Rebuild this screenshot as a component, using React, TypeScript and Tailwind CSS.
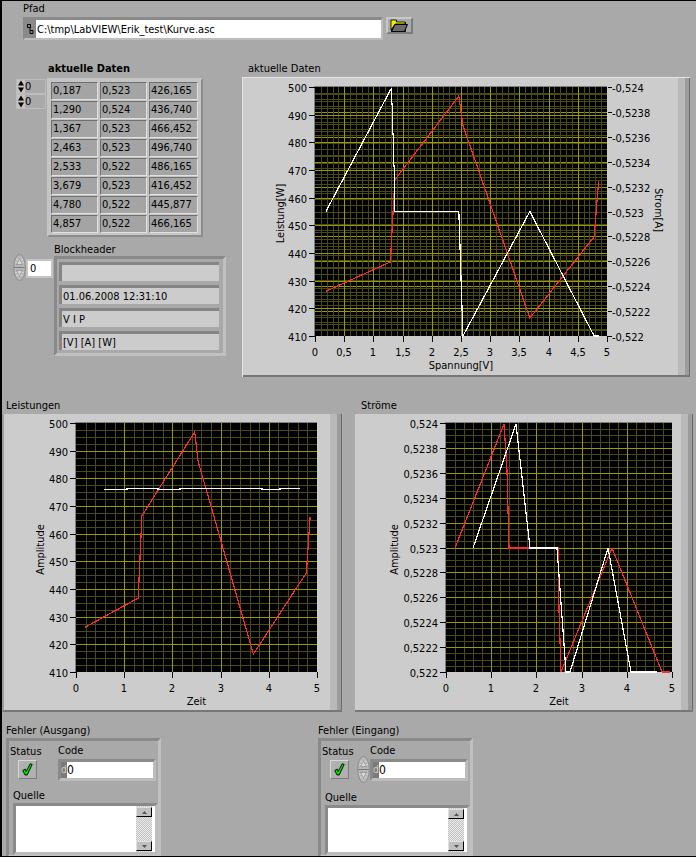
import React from 'react';

const V = [0.187, 1.29, 1.367, 2.463, 2.533, 3.679, 4.78, 4.857];
const W = [426.165, 436.74, 466.452, 496.74, 486.165, 416.452, 445.877, 466.165];
const I = [0.523, 0.524, 0.523, 0.523, 0.522, 0.523, 0.522, 0.522];

const ROWS = [
  ['0,187', '0,523', '426,165'],
  ['1,290', '0,524', '436,740'],
  ['1,367', '0,523', '466,452'],
  ['2,463', '0,523', '496,740'],
  ['2,533', '0,522', '486,165'],
  ['3,679', '0,523', '416,452'],
  ['4,780', '0,522', '445,877'],
  ['4,857', '0,522', '466,165'],
];

const MAJOR = '#9a9a00';
const MINOR = '#4a4a14';
const AMP = ['0,524', '0,5238', '0,5236', '0,5234', '0,5232', '0,523', '0,5228', '0,5226', '0,5224', '0,5222', '0,522'];
const WATT = ['500', '490', '480', '470', '460', '450', '440', '430', '420', '410'];

type Box = { x: number; y: number; w: number; h: number };

// vertical + horizontal grid lines, in page pixels
const gridLines = (b: Box, xDiv: number, xSub: number, yDiv: number, ySub: number) => {
  const out: React.ReactNode[] = [];
  for (let i = 0; i <= xDiv * xSub; i++) {
    const x = Math.round(b.x + (b.w * i) / (xDiv * xSub)) + 0.5;
    if (i % xSub) out.push(<line key={`vm${xDiv}-${i}`} x1={x} x2={x} y1={b.y} y2={b.y + b.h} stroke={MINOR} />);
  }
  for (let i = 0; i <= yDiv * ySub; i++) {
    const y = Math.round(b.y + (b.h * i) / (yDiv * ySub)) + 0.5;
    if (i % ySub) out.push(<line key={`hm${yDiv}-${i}`} x1={b.x} x2={b.x + b.w} y1={y} y2={y} stroke={MINOR} />);
  }
  for (let i = 1; i < xDiv; i++) {
    const x = Math.round(b.x + (b.w * i) / xDiv) + 0.5;
    out.push(<line key={`v${xDiv}-${i}`} x1={x} x2={x} y1={b.y} y2={b.y + b.h} stroke={MAJOR} />);
  }
  for (let i = 1; i < yDiv; i++) {
    const y = Math.round(b.y + (b.h * i) / yDiv) + 0.5;
    out.push(<line key={`h${yDiv}-${i}`} x1={b.x} x2={b.x + b.w} y1={y} y2={y} stroke={MAJOR} />);
  }
  return out;
};

const Curve = ({ pts, color }: { pts: number[][]; color: string }) => (
  <polyline points={pts.map((p) => p.join(',')).join(' ')} fill="none" stroke={color} strokeWidth={1.2} />
);

const Chart = ({
  view,
  box,
  xLabels,
  yLabels,
  yTitle,
  yTitleX,
  xTitle,
  grid,
  children,
}: {
  view: Box;
  box: Box;
  xLabels: string[];
  yLabels: string[];
  yTitle: string;
  yTitleX: number;
  xTitle: string;
  grid: React.ReactNode;
  children: React.ReactNode;
}) => (
  <svg
    width={view.w}
    height={view.h}
    viewBox={`${view.x} ${view.y} ${view.w} ${view.h}`}
    className="block shrink-0"
    fontSize={11}
    shapeRendering="crispEdges"
  >
    <rect x={box.x - 1} y={box.y - 1} width={box.w + 1} height={box.h + 1} fill="#808080" />
    <rect x={box.x} y={box.y} width={box.w} height={box.h} fill="#000" />
    {grid}
    {children}
    {yLabels.map((t, i) => {
      const y = Math.round(box.y + (box.h * i) / (yLabels.length - 1));
      return (
        <g key={t}>
          <line x1={box.x - 6} x2={box.x} y1={y + 0.5} y2={y + 0.5} stroke="#000" />
          <text x={box.x - 8} y={y + 4.5} textAnchor="end" fill="#000">
            {t}
          </text>
        </g>
      );
    })}
    {xLabels.map((t, i) => {
      const x = Math.round(box.x + (box.w * i) / (xLabels.length - 1));
      return (
        <g key={t}>
          <line x1={x + 0.5} x2={x + 0.5} y1={box.y + box.h} y2={box.y + box.h + 6} stroke="#000" />
          <text x={x} y={box.y + box.h + 20} textAnchor="middle" fill="#000">
            {t}
          </text>
        </g>
      );
    })}
    <text x={box.x + box.w / 2} y={box.y + box.h + 33} textAnchor="middle" fill="#000">
      {xTitle}
    </text>
    <text
      transform={`translate(${yTitleX} ${box.y + box.h / 2 + 2}) rotate(-90)`}
      textAnchor="middle"
      fill="#000"
    >
      {yTitle}
    </text>
  </svg>
);

const Panel = ({ children, className }: { children: React.ReactNode; className: string }) => (
  <div className={`flex bg-[#cccccc] border-b-2 border-[#777777] ${className}`}>
    {children}
    <div className="w-[7px] bg-[#b9b9b9]" />
    <div className="w-[4px] bg-[#9c9c9c]" />
    <div className="w-px bg-[#6a6a6a]" />
  </div>
);

const Spinner = ({ className }: { className?: string }) => (
  <svg width="13" height="27" viewBox="0 0 13 28" className={`block shrink-0 ${className ?? ''}`}>
    <ellipse cx="6.5" cy="14" rx="6" ry="13.5" fill="#b8b8b8" stroke="#8a8a8a" />
    <path d="M3 6h7M2 9h9M2 19h9M3 22h7" stroke="#dddddd" />
    <line x1="1" x2="12" y1="14" y2="14" stroke="#777777" />
    <path d="M6.5 5 3.5 11h6z" fill="#dcdcdc" stroke="#777777" strokeWidth="0.6" />
    <path d="M6.5 23 3.5 17h6z" fill="#dcdcdc" stroke="#777777" strokeWidth="0.6" />
  </svg>
);

const IndexBox = () => (
  <div className="flex h-[15px] w-[30px] border border-[#bdbdbd] bg-[#a9a9a9]">
    <svg width="8" height="13" viewBox="0 0 8 13" className="block shrink-0 bg-[#c4c4c4]">
      <path d="M4 0.5 1 5.5h6z" fill="#000" />
      <path d="M4 12.5 1 7.5h6z" fill="#000" />
    </svg>
    <span className="text-[11px] leading-[13px] text-black">0</span>
  </div>
);

const DataTable = () => (
  <div className="flex flex-col gap-px border-2 border-[#c4c4c4] bg-[#c4c4c4] border-r-[#8c8c8c] border-b-[#8c8c8c] p-[2px] w-[156px]">
    {ROWS.map((r) => (
      <div key={r[0] + r[2]} className="flex gap-[2px]">
        {r.map((c, i) => (
          <div
            key={i}
            className={`h-[18px] border border-[#707070] border-r-[#e0e0e0] border-b-[#e0e0e0] bg-[#a4a4a4] text-[11px] leading-[16px] text-black pl-px ${
              i === 2 ? 'w-[49px]' : 'w-[47px]'
            }`}
          >
            {c}
          </div>
        ))}
      </div>
    ))}
  </div>
);

const HeaderField = ({ text }: { text: string }) => (
  <div className="h-[19px] w-[160px] border-t-[3px] border-l-[3px] border-[#858585] bg-[#cccccc] text-[11px] leading-[18px] text-black pl-px">
    {text}
  </div>
);

const BlockHeader = () => (
  <div className="flex mt-[6px]">
    <div className="ml-[11px] w-[41px] shrink-0 flex items-start pt-[11px]">
      <Spinner />
      <div className="mt-[5px] h-[19px] w-[27px] border-2 border-[#c4c4c4] bg-white text-[11px] leading-[15px] text-black pl-[2px]">
        0
      </div>
    </div>
    <div className="flex flex-col">
      <div className="h-[13px] text-[11px] leading-[14px] text-black">Blockheader</div>
      <div className="flex flex-col gap-[4px] h-[100px] w-[172px] border-[3px] border-[#8a8a8a] border-r-[#c0c0c0] border-b-[#c0c0c0] pl-[2px] pt-[3px]">
        <HeaderField text="" />
        <HeaderField text="01.06.2008 12:31:10" />
        <HeaderField text="V I P" />
        <HeaderField text="[V] [A] [W]" />
      </div>
    </div>
  </div>
);

const FolderIcon = () => (
  <svg width="19" height="13" viewBox="0 0 19 13" className="block">
    <path d="M1.5 1.5h5v2h9v9h-14z" fill="#4d4d4d" stroke="#000" />
    <path d="M1 1h5.5v2H15v2H5L1 11z" fill="#f4ee00" stroke="#000" strokeWidth="0.8" />
    <path d="M5 5.5h12.5l-3 7h-13z" fill="#6a6a6a" stroke="#000" />
  </svg>
);

const PathControl = () => (
  <div className="ml-[21px] mt-[2px] flex items-start gap-[3px]">
    <div className="flex h-[23px] w-[360px] border-t-[3px] border-l-[2px] border-[#8a8a8a] border-b-2 border-r-2 border-b-[#bdbdbd] border-r-[#bdbdbd]">
      <div className="w-[11px] shrink-0 bg-[#8a8a8a] flex items-center justify-center">
        <svg width="7" height="10" viewBox="0 0 7 10" className="block">
          <path d="M0.5 0.5h3v3h-3zM3 3.5v3h3v3H3v-3" fill="none" stroke="#000" />
        </svg>
      </div>
      <div className="flex-1 bg-white text-[11px] leading-[19px] text-black pl-px">
        C:\tmp\LabVIEW\Erik_test\Kurve.asc
      </div>
    </div>
    <div className="flex h-[17px] w-[27px] items-center justify-center border-2 border-[#c8c8c8] border-r-[#7c7c7c] border-b-[#7c7c7c] bg-[#a9a9a9]">
      <FolderIcon />
    </div>
  </div>
);

const ScrollArrow = ({ up }: { up?: boolean }) => (
  <div className="flex h-[10px] items-center justify-center border border-[#e0e0e0] border-r-black border-b-black bg-[#c0c0c0]">
    <svg width="5" height="3" viewBox="0 0 5 3" className="block">
      <path d={up ? 'M2.5 0 5 3H0z' : 'M0 0h5L2.5 3z'} fill="#555555" />
    </svg>
  </div>
);

const ErrorCluster = ({ title, spinner }: { title: string; spinner?: boolean }) => (
  <div className="flex w-[155px] flex-col">
    <div className="h-[14px] mt-[11px] text-[11px] leading-[16px] text-black">{title}</div>
    <div className="mt-px flex h-[120px] flex-col border-[3px] border-[#8a8a8a] border-r-[#c0c0c0] border-b-[#c0c0c0] pl-px pt-[3px]">
      <div className="flex">
        <div className="w-[48px] shrink-0">
          <div className="h-[14px] text-[11px] leading-[16px] text-black">Status</div>
          <div className="flex mt-[2px] ml-[8px]">
            <div className="flex h-[19px] w-[19px] shrink-0 items-center justify-center border border-[#d8d8d8] border-r-[#7c7c7c] border-b-[#7c7c7c] bg-[#b0b0b0]">
              <svg width="11" height="13" viewBox="0 0 11 13" className="block">
                <path d="M0.8 7.5 3.2 6l1 2.5L8.2 0.8l2 0.6-5 10.6H3z" fill="#00e000" stroke="#000" strokeWidth="0.9" />
              </svg>
            </div>
            {spinner && <Spinner className="ml-[8px] -mt-[4px]" />}
          </div>
        </div>
        <div className="flex flex-col">
          <div className="h-[14px] text-[11px] leading-[16px] text-black -mt-px">Code</div>
          <div className="flex h-[22px] w-[98px] border-[3px] border-[#8a8a8a] border-r-[#bdbdbd] border-b-[#bdbdbd] mt-[2px]">
            <div className="w-[6px] shrink-0 bg-[#7a7a7a] text-[10px] leading-[16px] text-[#cfcfcf]">d</div>
            <div className="flex-1 bg-white text-[12px] leading-[16px] text-black">0</div>
          </div>
        </div>
      </div>
      <div className="ml-[3px] mt-[7px] h-[14px] text-[11px] leading-[16px] text-black">Quelle</div>
      <div className="ml-[3px] mt-px flex h-[52px] w-[145px] border-[3px] border-[#8a8a8a] border-r-[#bdbdbd] border-b-[#bdbdbd] bg-white justify-end">
        <div className="flex w-[16px] flex-col justify-between bg-[repeating-conic-gradient(#c4c4c4_0_25%,#e8e8e8_0_50%)] bg-[length:2px_2px] mr-[3px] py-px">
          <ScrollArrow up />
          <ScrollArrow />
        </div>
      </div>
    </div>
  </div>
);

export default function App() {
  const c1: Box = { x: 315, y: 87, w: 292, h: 249 };
  const c2: Box = { x: 76, y: 423, w: 241, h: 249 };
  const c3: Box = { x: 446, y: 423, w: 226, h: 249 };

  const xs1 = (v: number) => c1.x + (v * c1.w) / 5;
  const yw = (b: Box, w: number) => b.y + b.h - ((w - 410) * b.h) / 90;
  const yi = (b: Box, a: number) => b.y + b.h - ((a - 0.522) * b.h) / 0.002;

  const red1 = V.map((v, i) => [xs1(v), yw(c1, W[i])]);
  // the near-vertical drop after the peak is stepped pixel by pixel
  const white1 = [
    [xs1(V[0]), yi(c1, I[0])],
    [391.5, 88],
    [391.5, 104],
    [392.5, 104],
    [392.5, 134],
    [393.5, 134],
    [393.5, 166],
    [394.5, 166],
    [394.5, 211.5],
    ...V.slice(3).map((v, i) => [xs1(v), yi(c1, I[i + 3])]),
  ];
  const red2 = V.map((v, i) => [c2.x + (v * c2.w) / 5, yw(c2, W[i])]);
  const white2 = [
    [104, 489.5],
    [127, 489.5],
    [127, 488.5],
    [158, 488.5],
    [158, 489.5],
    [180, 489.5],
    [180, 488.5],
    [262, 488.5],
    [262, 489.5],
    [280, 489.5],
    [280, 488.5],
    [300, 488.5],
  ];
  const red3 = [
    [455, 548],
    [504, 424],
    [507, 470],
    [509, 548],
    [558, 548],
    [559, 610],
    [561, 672],
    [612, 548],
    [662, 672],
    [670, 672],
  ];
  const white3 = [
    [473, 548],
    [516, 424],
    [530, 548],
    [557, 548],
    [566, 672],
    [570, 672],
    [608, 548],
    [631, 672],
    [657, 672],
  ];

  return (
    <div className="box-border flex h-[857px] w-[696px] flex-col overflow-hidden border-t border-b border-l-2 border-black bg-[#a9a9a9] font-['DejaVu_Sans_Condensed','DejaVu_Sans',sans-serif]">
      <div className="h-[60px] shrink-0">
        <div className="h-[14px] pl-[21px] text-[11px] leading-[16px] text-black">Pfad</div>
        <PathControl />
      </div>

      <div className="flex h-[337px] shrink-0">
        <div className="w-[240px] shrink-0">
          <div className="h-[14px] pl-[46px] text-[11px] font-bold leading-[16px] text-black">aktuelle Daten</div>
          <div className="mt-[3px] flex pl-[14px] gap-[1px]">
            <div className="flex flex-col pt-px">
              <IndexBox />
              <IndexBox />
            </div>
            <DataTable />
          </div>
          <BlockHeader />
        </div>
        <div className="flex flex-col">
          <div className="h-[16px] pl-[6px] text-[11px] leading-[16px] text-black">aktuelle Daten</div>
          <div className="w-[448px] border-t border-l border-[#e4e4e4]">
            <Panel className="h-[299px]">
              <Chart
                view={{ x: 243, y: 78, w: 435, h: 297 }}
                box={c1}
                xLabels={['0', '0,5', '1', '1,5', '2', '2,5', '3', '3,5', '4', '4,5', '5']}
                yLabels={WATT}
                yTitle="Leistung[W]"
                yTitleX={284}
                xTitle="Spannung[V]"
                grid={
                  <>
                    {gridLines(c1, 1, 1, 10, 4)}
                    {gridLines(c1, 10, 5, 9, 4)}
                  </>
                }
              >
                <Curve pts={red1} color="#ff2a2a" />
                <Curve pts={white1} color="#ffffff" />
                {AMP.map((t, i) => {
                  const y = Math.round(c1.y + (c1.h * i) / 10);
                  return (
                    <g key={t}>
                      <line x1={608} x2={612} y1={y + 0.5} y2={y + 0.5} stroke="#000" />
                      <text x={612} y={y + 4.5} fill="#000">
                        -{t}
                      </text>
                    </g>
                  );
                })}
                <text transform="translate(655 210) rotate(90)" textAnchor="middle" fill="#000">
                  Strom[A]
                </text>
              </Chart>
            </Panel>
          </div>
        </div>
      </div>

      <div className="flex h-[314px] shrink-0 gap-[13px]">
        <div className="flex flex-col">
          <div className="h-[16px] pl-[4px] text-[11px] leading-[16px] text-black">Leistungen</div>
          <Panel className="h-[299px] w-[340px] border-l-2 border-l-[#9c9c9c]">
            <Chart
              view={{ x: 4, y: 414, w: 326, h: 296 }}
              box={c2}
              xLabels={['0', '1', '2', '3', '4', '5']}
              yLabels={WATT}
              yTitle="Amplitude"
              yTitleX={44}
              xTitle="Zeit"
              grid={gridLines(c2, 5, 5, 9, 4)}
            >
              <Curve pts={red2} color="#ff2a2a" />
              <Curve pts={white2} color="#ffffff" />
            </Chart>
          </Panel>
        </div>
        <div className="flex flex-col">
          <div className="h-[16px] pl-[6px] text-[11px] leading-[16px] text-black">Ströme</div>
          <Panel className="h-[299px] w-[338px]">
            <Chart
              view={{ x: 355, y: 414, w: 326, h: 296 }}
              box={c3}
              xLabels={['0', '1', '2', '3', '4', '5']}
              yLabels={AMP}
              yTitle="Amplitude"
              yTitleX={398}
              xTitle="Zeit"
              grid={gridLines(c3, 5, 5, 10, 4)}
            >
              <Curve pts={red3} color="#ff2a2a" />
              <Curve pts={white3} color="#ffffff" />
            </Chart>
          </Panel>
        </div>
      </div>

      <div className="flex flex-1 pl-[4px] gap-[157px]">
        <ErrorCluster title="Fehler (Ausgang)" />
        <ErrorCluster title="Fehler (Eingang)" spinner />
      </div>
    </div>
  );
}
